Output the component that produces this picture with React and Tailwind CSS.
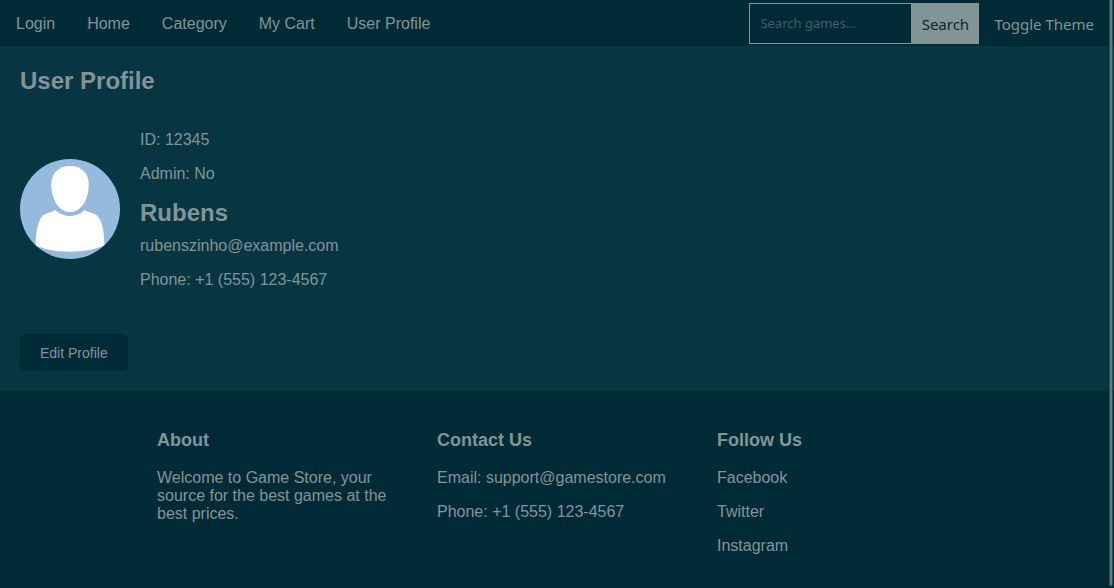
const navLinks = ["Login", "Home", "Category", "My Cart", "User Profile"];
const socialLinks = ["Facebook", "Twitter", "Instagram"];

function Header() {
  return (
    <header className="flex items-center justify-between bg-[#002b36] pr-[5px]">
      <nav className="flex h-[46px] items-center">
        {navLinks.map((label) => (
          <a key={label} href="#" className="px-4 pt-4 pb-3.5">
            {label}
          </a>
        ))}
      </nav>
      <div className="flex items-center font-['Noto_Sans',sans-serif] text-[15px]">
        <form className="flex h-[41px]" onSubmit={(e) => e.preventDefault()}>
          <input
            type="search"
            aria-label="Search games"
            placeholder="Search games..."
            className="w-[162px] border border-r-0 border-[#839496] bg-transparent px-2.5 text-[13px] outline-none placeholder:text-[#839496]/50"
          />
          <button type="submit" className="w-[68px] bg-[#839496] pt-0.5 text-[#002b36]">
            Search
          </button>
        </form>
        <button type="button" className="px-[15px] pt-0.5">
          Toggle Theme
        </button>
      </div>
    </header>
  );
}

function Avatar() {
  return (
    <svg viewBox="0 0 100 100" className="size-[100px] shrink-0" role="img" aria-label="Rubens">
      <circle cx="50" cy="50" r="50" fill="#95bade" />
      <path
        d="M50 7C38.500 7 31.200 14.500 31.200 25.500C31.200 40 38.500 53 50 53C61.500 53 68.800 40 68.800 25.500C68.800 14.500 61.500 7 50 7Z"
        fill="#fff"
      />
      <path
        d="M35.500 51C39 54.500 44 57 50 57C56 57 61 54.500 64.500 51C68 53.500 72.500 53.500 77 56.500C82 61 84.500 73 84.300 86.500C74 91 62 92.700 50 92.700C38 92.700 26 91 15.700 86.500C15.700 73 18 61 23 56.500C27.500 53.500 32 53.500 35.500 51Z"
        fill="#fff"
      />
    </svg>
  );
}

function Profile() {
  return (
    <main className="px-5 pt-[21px] pb-5">
      <h1 className="text-[24px] leading-7 font-bold">User Profile</h1>
      <section className="mt-[34px] flex items-center gap-5">
        <Avatar />
        <div className="pt-0.5">
          <p>ID: 12345</p>
          <p className="mt-4">Admin: No</p>
          <h2 className="mt-4 text-[24px] leading-7 font-bold">Rubens</h2>
          <p className="mt-2.5">rubenszinho@example.com</p>
          <p className="mt-4">Phone: +1 (555) 123-4567</p>
        </div>
      </section>
      <button
        type="button"
        className="mt-[45px] block h-[37px] rounded-[5px] bg-[#002b36] px-5 text-[14px]"
      >
        Edit Profile
      </button>
    </main>
  );
}

function FooterColumn({ title, children }) {
  return (
    <section>
      <h3 className="mb-[18px] text-[18px] leading-[22px] font-bold">{title}</h3>
      <div className="flex flex-col items-start gap-4">{children}</div>
    </section>
  );
}

function Footer() {
  return (
    <footer className="grow bg-[#002b36] pt-[38px] pb-8">
      <div className="mx-auto grid max-w-[800px] grid-cols-3 gap-10">
        <FooterColumn title="About">
          <p>Welcome to Game Store, your source for the best games at the best prices.</p>
        </FooterColumn>
        <FooterColumn title="Contact Us">
          <p>Email: support@gamestore.com</p>
          <p>Phone: +1 (555) 123-4567</p>
        </FooterColumn>
        <FooterColumn title="Follow Us">
          {socialLinks.map((label) => (
            <a key={label} href="#">
              {label}
            </a>
          ))}
        </FooterColumn>
      </div>
    </footer>
  );
}

export default function App() {
  return (
    <div className="relative flex min-h-screen flex-col bg-[#073642] font-['Liberation_Sans',sans-serif] text-[16px] leading-[18px] text-[#839496]">
      <Header />
      <Profile />
      <Footer />
      <div
        aria-hidden="true"
        className="absolute top-0 right-px bottom-0.5 w-1 rounded-b-xs border-x border-[#2c4e57] bg-[#657b83]"
      />
    </div>
  );
}
